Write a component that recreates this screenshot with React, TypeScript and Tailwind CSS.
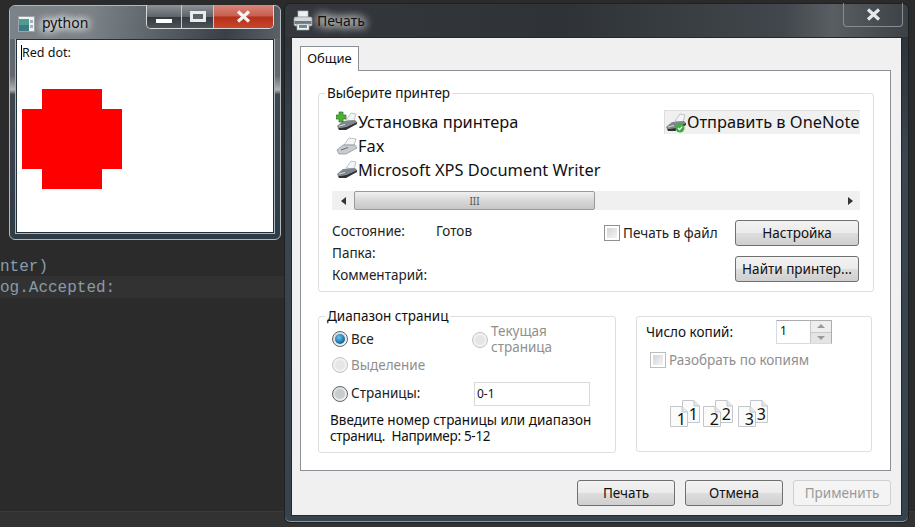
import React from 'react';

const ui = "font-['Noto_Sans','Open_Sans',sans-serif]";

function PrinterIcon({ badge }: { badge?: 'plus' | 'check' }) {
  return (
    <svg width="22" height="22" viewBox="0 0 22 22" className="shrink-0">
      <path d="M10 9 L15 2 L20 3 L18 10 Z" fill="#f2f4f5" stroke="#a9b0b5" strokeWidth="0.7" />
      <path d="M1 15 L7 10 L19 9 L21 11 L10 16 L2 17 Z" fill="#7f878d" />
      <path d="M2 17 L10 16 L21 11 L21 13 L10 19 L3 19 Z" fill="#2c3238" />
      <path d="M3 15 L9 13.5" stroke="#cfe0ea" strokeWidth="1" />
      {badge === 'plus' && (
        <path d="M3 1 H7 V4 H10 V8 H7 V11 H3 V8 H0 V4 H3 Z" fill="#4fae3c" stroke="#2b7a20" strokeWidth="0.7" />
      )}
      {badge === 'check' && (
        <g>
          <circle cx="15" cy="16" r="4.5" fill="#3fae43" />
          <path d="M13 16 L14.6 17.6 L17.2 14.6" stroke="#fff" strokeWidth="1.1" fill="none" />
        </g>
      )}
    </svg>
  );
}

function FaxIcon() {
  return (
    <svg width="22" height="22" viewBox="0 0 22 22" className="shrink-0">
      <path d="M8 10 L13 3 L20 4 L18 10 Z" fill="#f5f6f7" stroke="#a2a9ae" strokeWidth="0.7" />
      <path d="M1 15 L7 10 L19 10 L21 13 L10 19 L3 19 Z" fill="#c8ccd0" stroke="#858c92" strokeWidth="0.7" />
      <path d="M5 15 L12 12.5" stroke="#6d7378" strokeWidth="1.2" />
    </svg>
  );
}

function TitlePrinter() {
  return (
    <svg width="20" height="22" viewBox="0 0 20 22">
      <rect x="5" y="1" width="10" height="6" fill="#eef0f2" stroke="#b3b9bd" strokeWidth="0.7" />
      <rect x="1" y="7" width="18" height="9" rx="1.5" fill="#d6dadd" stroke="#8f979d" strokeWidth="0.7" />
      <rect x="1.5" y="11" width="17" height="3" fill="#6f777d" />
      <rect x="4" y="14" width="12" height="6" fill="#f4f6f7" stroke="#9aa1a6" strokeWidth="0.7" />
      <rect x="6" y="15" width="8" height="3" fill="#5f8fa3" />
    </svg>
  );
}

function PyIcon() {
  return (
    <svg width="17" height="16" viewBox="0 0 17 16">
      <rect x="0.5" y="0.5" width="16" height="15" fill="#eef2f3" stroke="#9ba4aa" />
      <rect x="1" y="3" width="10" height="12" fill="#4f9d8f" />
      <rect x="1" y="9" width="10" height="6" fill="#3c7a86" />
      <rect x="12" y="4" width="3" height="3" fill="#aab2b6" />
      <rect x="12" y="9" width="3" height="3" fill="#aab2b6" />
    </svg>
  );
}

function Btn({ label, disabled, w }: { label: string; disabled?: boolean; w: string }) {
  return (
    <div
      className={`${w} h-[26px] flex items-center justify-center rounded-[3px] border text-[13.5px] ${
        disabled
          ? 'border-[#d0d0d0] bg-[#f4f4f4] text-[#9a9a9a]'
          : 'border-[#707070] bg-[linear-gradient(#f2f2f2_0%,#ebebeb_48%,#dddddd_52%,#cfcfcf_100%)] text-[#111]'
      }`}
    >
      {label}
    </div>
  );
}

function Radio({ on, off }: { on?: boolean; off?: boolean }) {
  return (
    <div
      className={`w-[16px] h-[16px] shrink-0 rounded-full border flex items-center justify-center ${
        off ? 'border-[#c4c4c4] bg-[#f2f2f2]' : 'border-[#5f656a] bg-[linear-gradient(135deg,#d5d8da,#f5f5f5)]'
      }`}
    >
      {on ? (
        <div className="w-[10px] h-[10px] rounded-full bg-[radial-gradient(circle_at_40%_35%,#6cc4ec,#0a5f96_75%)]" />
      ) : (
        <div className={`w-[10px] h-[10px] rounded-full ${off ? 'bg-[#e6e6e6]' : 'bg-[#c9cccf]'}`} />
      )}
    </div>
  );
}

function Check({ off }: { off?: boolean }) {
  return (
    <div className={`w-[16px] h-[16px] shrink-0 border p-[2px] ${off ? 'border-[#bdbdbd]' : 'border-[#8e8f8f]'} bg-white`}>
      <div className="w-full h-full bg-[linear-gradient(135deg,#d2d5d8,#f4f4f4)]" />
    </div>
  );
}

function Group({ title, className, children }: { title?: string; className: string; children: React.ReactNode }) {
  return (
    <div className={`relative border border-[#dcdfe2] rounded-[3px] ${className}`}>
      {title && (
        <div className="absolute left-[6px] top-[-10px] bg-white px-[2px] text-[13.5px] leading-[18px] text-[#111] whitespace-nowrap">
          {title}
        </div>
      )}
      {children}
    </div>
  );
}

function Page({ n, back }: { n: number; back?: boolean }) {
  return (
    <div className={`absolute w-[18px] ${back ? 'left-[12px] top-0 h-[23px]' : 'left-0 top-[6px] h-[21px]'}`}>
      <svg width="18" height={back ? 23 : 21} className="absolute left-0 top-0">
        <path
          d={back ? 'M0.5 0.5 H12 L17.5 6 V22.5 H0.5 Z' : 'M0.5 0.5 H12 L17.5 6 V20.5 H0.5 Z'}
          fill="#fbfbfb"
          stroke="#c4c7ca"
        />
        <path d="M12 0.5 V6 H17.5" fill="#e4e6e8" stroke="#c4c7ca" />
      </svg>
      <span className={`absolute right-[2px] text-[16px] leading-[16px] text-[#111] ${back ? 'top-[6px]' : 'bottom-0'}`}>{n}</span>
    </div>
  );
}

function PageSet({ n }: { n: number }) {
  return (
    <div className="relative w-[30px] h-[27px]">
      <Page n={n} back />
      <Page n={n} />
    </div>
  );
}

function Printers() {
  const rows = [
    { name: 'Установка принтера', icon: <PrinterIcon badge="plus" /> },
    { name: 'Fax', icon: <FaxIcon /> },
    { name: 'Microsoft XPS Document Writer', icon: <PrinterIcon /> },
  ];
  return (
    <div className="flex h-[81px] pl-[4px] text-[16.4px] text-[#111]">
      <div className="w-[328px] flex flex-col">
        {rows.map((r) => (
          <div key={r.name} className="h-[24px] flex items-center whitespace-nowrap">
            {r.icon}
            <span>{r.name}</span>
          </div>
        ))}
      </div>
      <div className="flex-1 h-[24px] flex items-center bg-[#f0f0f0] border-t border-l border-[#dedede] whitespace-nowrap overflow-hidden">
        <PrinterIcon badge="check" />
        <span>Отправить в OneNote</span>
      </div>
    </div>
  );
}

function Scrollbar() {
  return (
    <div className="h-[19px] flex items-stretch bg-[#f0f0f0]">
      <div className="w-[22px] flex items-center justify-center">
        <div className="w-0 h-0 border-y-[4px] border-y-transparent border-r-[5px] border-r-[#333]" />
      </div>
      <div className="w-[241px] flex items-center justify-center rounded-[2px] border border-[#9a9a9a] bg-[linear-gradient(#f0f0f0,#d8d8d8_50%,#c6c6c6)] text-[10px] leading-none text-[#555]">
        III
      </div>
      <div className="flex-1 flex items-center justify-end pr-[7px]">
        <div className="w-0 h-0 border-y-[4px] border-y-transparent border-l-[5px] border-l-[#333]" />
      </div>
    </div>
  );
}

export default function App() {
  return (
    <div className={`relative w-[915px] h-[527px] overflow-hidden bg-[#2b2b2b] ${ui}`}>
      {/* code editor behind the windows */}
      <div className="absolute left-0 top-[256px] w-[284px] font-['Liberation_Mono',monospace] text-[16px] text-[#8a9ba8]">
        <div className="h-[20px] leading-[23px] whitespace-nowrap">nter)</div>
        <div className="h-[22px] leading-[25px] whitespace-nowrap bg-[#323232]">og.Accepted:</div>
      </div>
      <div className="absolute left-0 bottom-0 w-full h-[16px] bg-[#323232] border-t border-[#3a3a3a]" />

      {/* python window */}
      <div className="absolute left-[9px] top-[5px] w-[272px] h-[235px] flex flex-col rounded-[6px] border border-[#aeb8bd] bg-[linear-gradient(#5f676c_0%,#62696e_30%,#aeb3b6_36%,#3c4750_38%,#2f3b45_100%)]">
        <div className="h-[33px] relative shrink-0 rounded-t-[6px] bg-[linear-gradient(100deg,#7c8388_0%,#7c8388_30%,#5a6167_55%,#3a4046_80%,#5b6166_100%)]">
          <div className="absolute left-[8px] top-[10px]"><PyIcon /></div>
          <div className="absolute left-[32px] top-[7px] text-[14px] leading-[20px] text-[#111] [text-shadow:0_0_8px_#fff,0_0_8px_#fff,0_0_10px_#fff]">python</div>
          <div className="absolute right-[6px] top-[-1px] w-[128px] h-[24px] flex rounded-b-[5px] border border-t-0 border-[#d5d9dc] overflow-hidden">
            <div className="w-[35px] flex items-end justify-center pb-[5px] border-r border-[#c5c9cc] bg-[linear-gradient(#8c9297_0%,#5e656b_50%,#33393f_52%,#4c5359_100%)]">
              <div className="w-[16px] h-[4px] bg-white" />
            </div>
            <div className="w-[32px] flex items-center justify-center border-r border-[#c5c9cc] bg-[linear-gradient(#8c9297_0%,#5e656b_50%,#33393f_52%,#4c5359_100%)]">
              <div className="w-[16px] h-[11px] border-[3px] border-[#e9ecee] bg-[#5b6268]" />
            </div>
            <div className="flex-1 flex items-center justify-center bg-[linear-gradient(#d9847a_0%,#c7604f_48%,#b5301a_52%,#c9452b_100%)]">
              <svg width="15" height="13" viewBox="0 0 15 13">
                <path d="M2 1.5 L13 11.5 M13 1.5 L2 11.5" stroke="#f1f3f4" strokeWidth="3.2" />
              </svg>
            </div>
          </div>
        </div>
        <div className="mx-[6px] mb-[6px] flex-1 bg-white border border-[#233039] shadow-[0_0_0_1px_#a9b6bd] pt-[1px] pl-[4px]">
          <div className="h-[22px] flex items-center text-[12.5px] text-[#111] whitespace-nowrap">
            <span className="border-l border-black leading-[15px]">Red dot:</span>
          </div>
          {/* the red dot is drawn as three stacked blocks */}
          <div className="mt-[26px] ml-[1px] w-[100px] flex flex-col items-center">
            <div className="w-[60px] h-[20px] bg-[#ff0000]" />
            <div className="w-[100px] h-[60px] bg-[#ff0000]" />
            <div className="w-[60px] h-[20px] bg-[#ff0000]" />
          </div>
        </div>
      </div>

      {/* print dialog */}
      <div className="absolute left-[284px] top-[3px] w-[625px] h-[520px] flex flex-col rounded-[6px] border border-[#1c2125] bg-[linear-gradient(#2d3135_0%,#2e3337_6%,#3b4650_30%,#36424c_100%)] shadow-[inset_0_-1px_0_#8e999f]">
        <div className="h-[33px] shrink-0 relative bg-[linear-gradient(90deg,#34383c_0%,#2f3337_45%,#41474c_80%,#595e63_88%,#3c4146_100%)] rounded-t-[6px]">
          <div className="absolute left-[8px] top-[6px]"><TitlePrinter /></div>
          <div className="absolute left-[32px] top-[7px] text-[14px] leading-[20px] text-[#111] [text-shadow:0_0_8px_#fff,0_0_10px_#fff,0_0_12px_#fff]">Печать</div>
          <div className="absolute right-[5px] top-[-1px] w-[60px] h-[24px] flex items-center justify-center rounded-b-[4px] border border-t-0 border-[#868c91]">
            <svg width="15" height="13" viewBox="0 0 15 13">
              <path d="M2 1.5 L13 11.5 M13 1.5 L2 11.5" stroke="#e6e8ea" strokeWidth="3.2" />
            </svg>
          </div>
        </div>

        <div className="mx-[6px] mb-[6px] flex-1 flex flex-col min-h-0 bg-[#f0f0f0] border border-[#20292f] pt-[8px] pl-[8px] pr-[10px]">
          <div className="w-[59px] h-[25px] -mb-px relative z-10 flex items-center justify-center bg-white border border-b-0 border-[#8a9096] text-[13px] text-[#111]">
            Общие
          </div>
          <div className="h-[401px] bg-white border border-[#8a9096] pt-[22px] pl-[17px] pr-[16px] text-[13.5px] text-[#222]">
            <Group title="Выберите принтер" className="h-[199px] pt-[16px] pl-[13px] pr-[13px]">
              <Printers />
              <Scrollbar />
              <div className="flex mt-[10px]">
                <div className="w-[272px] leading-[22px]">
                  <div className="flex"><span className="w-[104px]">Состояние:</span><span>Готов</span></div>
                  <div>Папка:</div>
                  <div>Комментарий:</div>
                </div>
                <div className="flex items-start mt-[5px] gap-[3px] w-[131px]">
                  <Check />
                  <span className="leading-[16px] whitespace-nowrap">Печать в файл</span>
                </div>
                <div className="flex flex-col gap-[10px]">
                  <Btn label="Настройка" w="w-[124px]" />
                  <Btn label="Найти принтер..." w="w-[124px]" />
                </div>
              </div>
            </Group>

            <div className="flex mt-[24px] gap-[20px]">
              <Group title="Диапазон страниц" className="w-[298px] h-[137px] pt-[12px] pl-[13px]">
                <div className="grid grid-cols-[140px_1fr] gap-y-[6px]">
                  <div className="flex flex-col gap-[6px]">
                    <div className="flex items-center gap-[3px]"><Radio on /><span>Все</span></div>
                    <div className="flex items-center gap-[3px] text-[#8f8f8f]"><Radio off /><span>Выделение</span></div>
                  </div>
                  <div className="flex items-start gap-[3px] -mt-[6px] leading-[16px] text-[#8f8f8f]">
                    <div className="mt-[9px]"><Radio off /></div>
                    <div className="flex flex-col">
                      <span>Текущая</span>
                      <span>страница</span>
                    </div>
                  </div>
                  <div className="flex items-center gap-[3px]"><Radio /><span>Страницы:</span></div>
                  <div className="h-[24px] w-[116px] ml-[2px] border border-[#d8dbde] pl-[2px] flex items-center text-[12px] text-[#111]">0-1</div>
                </div>
                <div className="flex flex-col mt-[6px] -ml-[2px] leading-[16px] whitespace-nowrap text-[#111]">
                  <span>Введите номер страницы или диапазон</span>
                  <span className="tracking-[-0.3px]">страниц.&nbsp; Например: 5-12</span>
                </div>
              </Group>

              <Group className="w-[236px] h-[136px] pt-[3px] pl-[9px]">
                <div className="flex items-center h-[24px] text-[#111]">
                  <span className="w-[130px]">Число копий:</span>
                  <div className="w-[56px] h-[24px] flex border border-[#d8dbde] border-r-[#acacac] border-t-[#acacac] text-[12px]">
                    <span className="flex-1 pl-[3px] leading-[20px]">1</span>
                    <div className="w-[21px] flex flex-col border-l border-[#c8c8c8]">
                      <div className="flex-1 flex items-center justify-center bg-[#eeeeee] border-b border-[#c8c8c8]">
                        <div className="w-0 h-0 border-x-[4px] border-x-transparent border-b-[4px] border-b-[#9a9a9a]" />
                      </div>
                      <div className="flex-1 flex items-center justify-center bg-[#e4e4e4]">
                        <div className="w-0 h-0 border-x-[4px] border-x-transparent border-t-[4px] border-t-[#9a9a9a]" />
                      </div>
                    </div>
                  </div>
                </div>
                <div className="flex items-center gap-[3px] mt-[6px] ml-[4px] text-[#8f8f8f]">
                  <Check off />
                  <span>Разобрать по копиям</span>
                </div>
                <div className="flex mt-[30px] ml-[24px] gap-[3px]">
                  <PageSet n={1} />
                  <PageSet n={2} />
                  <div className="ml-[2px]"><PageSet n={3} /></div>
                </div>
              </Group>
            </div>
          </div>

          <div className="flex-1 flex items-start justify-end gap-[10px] pt-[9px]">
            <Btn label="Печать" w="w-[98px]" />
            <Btn label="Отмена" w="w-[98px]" />
            <Btn label="Применить" disabled w="w-[98px]" />
          </div>
        </div>
      </div>
    </div>
  );
}
